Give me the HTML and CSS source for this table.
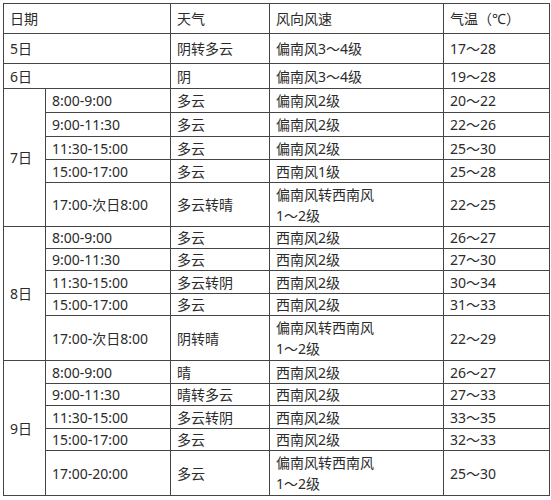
FILE: index.html
```html
<!DOCTYPE html>
<html lang="zh-CN">
<head>
<meta charset="utf-8">
<link rel="stylesheet" href="styles.css">
</head>
<body>
<table class="weather">
  <colgroup>
    <col class="c-day"><col class="c-time"><col class="c-sky"><col class="c-wind"><col class="c-temp">
  </colgroup>
  <tr class="h30"><td colspan="2">日期</td><td>天气</td><td>风向风速</td><td>气温（℃）</td></tr>
  <tr class="h30"><td colspan="2">5日</td><td>阴转多云</td><td>偏南风3～4级</td><td>17～28</td></tr>
  <tr class="h25"><td colspan="2">6日</td><td>阴</td><td>偏南风3～4级</td><td>19～28</td></tr>

  <tr class="h24"><td rowspan="5">7日</td><td>8:00-9:00</td><td>多云</td><td>偏南风2级</td><td>20～22</td></tr>
  <tr class="h24"><td>9:00-11:30</td><td>多云</td><td>偏南风2级</td><td>22～26</td></tr>
  <tr class="h23"><td>11:30-15:00</td><td>多云</td><td>偏南风2级</td><td>25～30</td></tr>
  <tr class="h23"><td>15:00-17:00</td><td>多云</td><td>西南风1级</td><td>25～28</td></tr>
  <tr class="h44"><td>17:00-次日8:00</td><td>多云转晴</td><td>偏南风转西南风<br>1～2级</td><td>22～25</td></tr>

  <tr class="h22"><td rowspan="5">8日</td><td>8:00-9:00</td><td>多云</td><td>西南风2级</td><td>26～27</td></tr>
  <tr class="h22"><td>9:00-11:30</td><td>多云</td><td>西南风2级</td><td>27～30</td></tr>
  <tr class="h23"><td>11:30-15:00</td><td>多云转阴</td><td>西南风2级</td><td>30～34</td></tr>
  <tr class="h22"><td>15:00-17:00</td><td>多云</td><td>西南风2级</td><td>31～33</td></tr>
  <tr class="h45"><td>17:00-次日8:00</td><td>阴转晴</td><td>偏南风转西南风<br>1～2级</td><td>22～29</td></tr>

  <tr class="h23"><td rowspan="5">9日</td><td>8:00-9:00</td><td>晴</td><td>西南风2级</td><td>26～27</td></tr>
  <tr class="h22"><td>9:00-11:30</td><td>晴转多云</td><td>西南风2级</td><td>27～33</td></tr>
  <tr class="h23"><td>11:30-15:00</td><td>多云转阴</td><td>西南风2级</td><td>33～35</td></tr>
  <tr class="h22"><td>15:00-17:00</td><td>多云</td><td>西南风2级</td><td>32～33</td></tr>
  <tr class="h45"><td>17:00-20:00</td><td>多云</td><td>偏南风转西南风<br>1～2级</td><td>25～30</td></tr>
</table>
</body>
</html>
```

FILE: styles.css
```css
html, body {
  margin: 0;
  padding: 0;
  background: #ffffff;
}
body {
  padding: 3px 0 0 3px;
}
.weather {
  border-collapse: collapse;
  table-layout: fixed;
  width: 546px;
  font-family: "Noto Sans", "Noto Sans CJK SC", sans-serif;
  font-size: 14px;
  color: #2b2b2b;
}
.c-day { width: 42px; }
.c-time { width: 125px; }
.c-sky { width: 99px; }
.c-wind { width: 174px; }
.c-temp { width: 106px; }
.weather td {
  border: 1px solid #454545;
  padding: 0 0 0 6px;
  vertical-align: middle;
  line-height: 21px;
  white-space: nowrap;
  overflow: hidden;
}
.h22 { height: 22px; }
.h23 { height: 23px; }
.h24 { height: 24px; }
.h25 { height: 25px; }
.h30 { height: 30px; }
.h44 { height: 44px; }
.h45 { height: 45px; }
```
